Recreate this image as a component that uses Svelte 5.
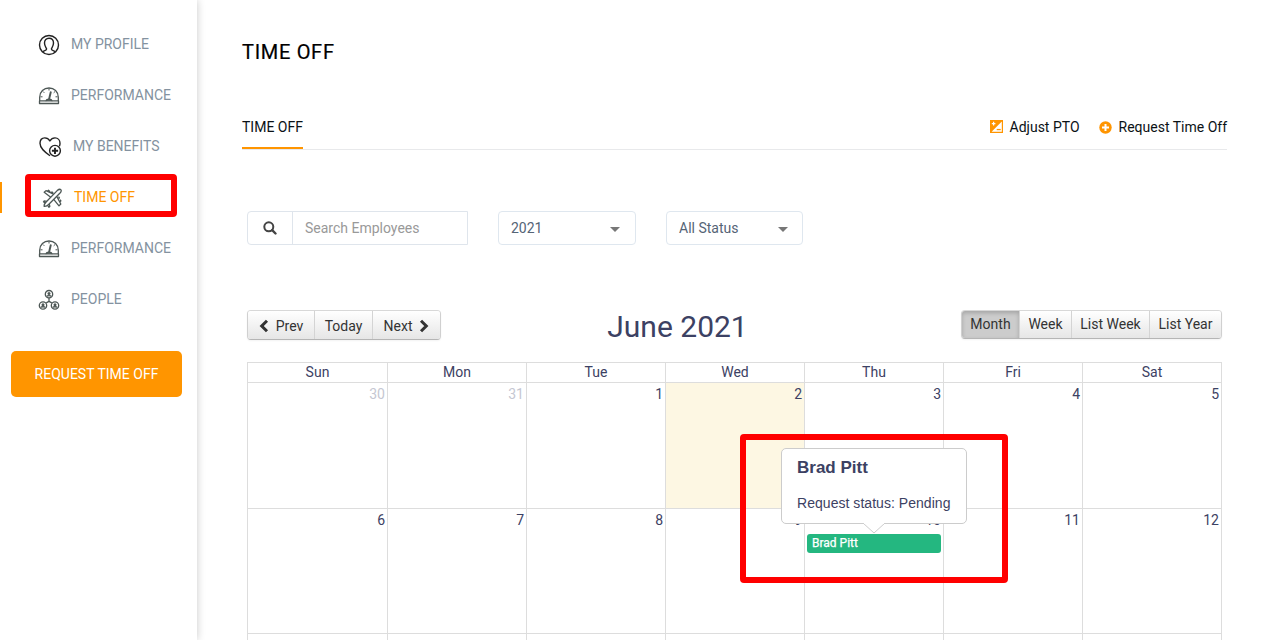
<script>
	const navItems = [
		{ label: 'MY PROFILE', icon: 'profile' },
		{ label: 'PERFORMANCE', icon: 'gauge' },
		{ label: 'MY BENEFITS', icon: 'heart' },
		{ label: 'TIME OFF', icon: 'plane', active: true },
		{ label: 'PERFORMANCE', icon: 'gauge' },
		{ label: 'PEOPLE', icon: 'people' }
	];

	const weekdays = ['Sun', 'Mon', 'Tue', 'Wed', 'Thu', 'Fri', 'Sat'];
	const weeks = [
		[30, 31, 1, 2, 3, 4, 5],
		[6, 7, 8, 9, 10, 11, 12],
		[13, 14, 15, 16, 17, 18, 19]
	];
	const views = ['Month', 'Week', 'List Week', 'List Year'];

	let view = $state('Month');
	let search = $state('');
</script>

<div class="page">
	<aside>
		<nav>
			{#each navItems as item}
				<a href="#top" class="nav-item {item.icon}" class:active={item.active}>
					{#if item.icon === 'profile'}
						<svg width="22" height="22" viewBox="0 0 22 22">
							<circle cx="11" cy="11" r="9.5" />
							<path d="M4.8 18.1c.6-1.6 3.8-1.4 3.8-3 0-1.3-2.1-2.5-2.1-6C6.5 6 8.3 4.2 11 4.2s4.500 1.800 4.500 4.900c0 3.500-2.100 4.700-2.100 6 0 1.600 3.200 1.400 3.800 3" />
						</svg>
					{:else if item.icon === 'gauge'}
						<svg class="soft" width="22" height="22" viewBox="0 0 22 22">
							<path d="M1.700 16v-3.700C1.700 6.800 5.800 3 11 3s9.300 3.800 9.300 9.300V16" />
							<path d="M1.700 15.800h6.500M13.800 15.800h6.500M1.500 15.800v2.700h19v-2.700" />
							<path d="M8.200 15.800c.3-2.200 5.300-2.200 5.600 0z" fill="#4d5755" />
							<path class="bold" d="M11 14.500l1.900-8" />
							<path class="thin" d="M11 3.500v2M5 6.500l1.300 1.300M17 6.500l-1.300 1.300M2.500 11.800h2M17.500 11.800h2" />
						</svg>
					{:else if item.icon === 'heart'}
						<svg width="24" height="24" viewBox="0 0 24 24">
							<path d="M12 20.800C6.800 17 2 13.300 2 8.200c0-3.200 2-5.300 4.800-5.300 2.300 0 3.900 1 5.100 3 1.200-2 2.800-3 5.100-3 2.900 0 5 2.200 5 5.300 0 1.200-.2 2.100-.6 3" />
							<circle cx="17" cy="15.800" r="5.400" />
							<path class="bold" d="M17 12.700v6.200M13.900 15.800h6.200" />
						</svg>
					{:else if item.icon === 'plane'}
						<svg class="soft" width="20" height="20" viewBox="0 0 20 20">
							<path d="M2.200 18.300c-.3-1.700.3-2.700 1.900-4.300L15.200 2.600c1.400-1.200 3.200-1.300 3.600-.9.500.5.200 2.300-1 3.600L6.900 16.300c-1.600 1.600-2.800 2.200-4.700 2z" />
							<path d="M11.600 6.200L4 2.600 2.200 4.300l6.500 4.900M14.800 8.500l4 7.500-1.800 1.900-5.300-6.500" />
							<path d="M5.500 3.200l1-.9 1.300 1.100-.3.800M9 4.800l1-.9 1.200 1.100M18 13.800l.9-.9-1-1.300M16.500 10.700l.9-.9-.9-1.200M4.800 13.300l-2.600-.4-.7.9 2.100 1.100M7.300 15.900l.5 2.500-.9.800-1.200-1.700" />
						</svg>
					{:else}
						<svg class="soft" width="22" height="22" viewBox="0 0 22 22">
							<circle cx="11" cy="5.200" r="3.700" />
							<circle cx="5" cy="16.500" r="3.700" />
							<circle cx="17" cy="16.500" r="3.700" />
							<path d="M11 9.100v3.300M8.200 13.900l2.800-1.500 2.800 1.500M8.600 7.300c.7-1 4.100-1 4.800 0M2.600 18.500c.7-1 4.100-1 4.800 0M14.600 18.500c.7-1 4.100-1 4.800 0" />
							<circle class="head" cx="11" cy="4.500" r="1.500" />
							<circle class="head" cx="5" cy="15.800" r="1.500" />
							<circle class="head" cx="17" cy="15.800" r="1.500" />
						</svg>
					{/if}
					<span>{item.label}</span>
					{#if item.active}
						<i class="marker"></i>
						<i class="nav-highlight"></i>
					{/if}
				</a>
			{/each}
		</nav>
		<button class="request">REQUEST TIME OFF</button>
	</aside>

	<main>
		<h1>TIME OFF</h1>

		<div class="tabs">
			<a href="#top" class="tab">TIME OFF</a>
			<div class="actions">
				<a href="#top">
					<svg class="adjust" width="13" height="13" viewBox="0 0 13 13">
						<path fill="#ff9500" d="M0 0h13v13H0z" />
						<path fill="#fff" d="M11.800 1.600v10.200H1.600zM3 1.800h1.200V3h1.200v1.200H4.200v1.200H3V4.200H1.800V3H3z" />
						<path fill="#ff9500" d="M6.700 8.900h4v1.300h-4z" />
					</svg>
					Adjust PTO
				</a>
				<a href="#top">
					<svg width="13" height="13" viewBox="0 0 13 13">
						<circle cx="6.500" cy="6.500" r="6.200" fill="#ff9500" />
						<path d="M6.500 3v7M3 6.500h7" stroke="#fff" stroke-width="2" />
					</svg>
					Request Time Off
				</a>
			</div>
		</div>

		<div class="filters">
			<div class="search">
				<span class="search-icon">
					<svg width="14" height="14" viewBox="0 0 14 14">
						<circle cx="5.800" cy="5.800" r="4.500" fill="none" stroke="#444" stroke-width="2" />
						<path d="M9.200 9.200l3.300 3.300" stroke="#444" stroke-width="2.400" stroke-linecap="round" />
					</svg>
				</span>
				<input type="text" placeholder="Search Employees" bind:value={search} />
			</div>
			<div class="select year">2021<i class="caret"></i></div>
			<div class="select status">All Status<i class="caret"></i></div>
		</div>

		<div class="toolbar">
			<div class="group paging">
				<button>
					<svg width="10" height="14" viewBox="0 0 10 14"><path d="M8 1.700L2.700 7 8 12.300" /></svg>
					<span>Prev</span>
				</button>
				<button>Today</button>
				<button>
					<span>Next</span>
					<svg width="10" height="14" viewBox="0 0 10 14"><path d="M2 1.700L7.300 7 2 12.300" /></svg>
				</button>
			</div>
			<h2>June 2021</h2>
			<div class="group views">
				{#each views as name}
					<button class:selected={view === name} onclick={() => (view = name)}>{name}</button>
				{/each}
			</div>
		</div>

		<div class="calendar">
			<div class="row head-row">
				{#each weekdays as day}
					<div class="cell">{day}</div>
				{/each}
			</div>
			{#each weeks as week, w}
				<div class="row week week-{w}">
					{#each week as day}
						<div class="cell" class:other={w === 0 && day > 20} class:today={w === 0 && day === 2}>
							<span class="num">{day}</span>
							{#if w === 1 && day === 10}
								<div class="event">
									Brad Pitt
									<div class="popover">
										<h3>Brad Pitt</h3>
										<p>Request status: Pending</p>
										<svg width="22" height="11" viewBox="0 0 22 11">
											<path d="M0 0l11 10L22 0" fill="#fff" stroke="#ccc" />
											<path d="M1 0h20" stroke="#fff" stroke-width="2" />
										</svg>
									</div>
									<i class="event-highlight"></i>
								</div>
							{/if}
						</div>
					{/each}
				</div>
			{/each}
		</div>
	</main>
</div>

<style>
	:global(body) {
		background: #fff;
	}

	.page {
		display: flex;
		width: 1268px;
		height: 640px;
		overflow: hidden;
		font-family: Roboto, sans-serif;
		font-size: 14px;
		color: #3c4163;
	}

	.page * {
		box-sizing: border-box;
	}

	a {
		color: inherit;
		text-decoration: none;
	}

	button {
		font: inherit;
		cursor: pointer;
	}

	h1,
	h2,
	h3,
	p {
		margin: 0;
	}

	aside {
		width: 197px;
		flex: none;
		padding-top: 19px;
		box-shadow: 0 0 8px rgba(0, 0, 0, 0.22);
	}

	.nav-item {
		position: relative;
		display: flex;
		align-items: center;
		gap: 11px;
		height: 51px;
		padding-left: 38px;
		color: #8492a0;
		line-height: 20px;
	}

	.nav-item span {
		padding-bottom: 2px;
	}

	.nav-item svg {
		margin-top: 1px;
		fill: none;
		stroke: #222;
		stroke-width: 1.4;
		stroke-linejoin: round;
	}

	.nav-item svg.soft {
		stroke: #4d5755;
		stroke-width: 1.3;
	}

	.nav-item svg .bold {
		stroke-width: 1.9;
	}

	.nav-item svg .thin {
		stroke-width: 1;
	}

	.nav-item svg .head {
		fill: #4d5755;
		stroke: none;
	}

	.nav-item.plane {
		padding-left: 42px;
		gap: 12px;
		color: #ff9500;
	}

	.marker {
		position: absolute;
		left: 0;
		top: 10px;
		width: 2px;
		height: 31px;
		background: #ff9500;
	}

	.nav-highlight {
		position: absolute;
		left: 25px;
		top: 2px;
		width: 152px;
		height: 43px;
		border: 6px solid #f00;
		border-radius: 4px;
	}

	.request {
		display: block;
		width: 171px;
		height: 46px;
		margin: 26px 0 0 11px;
		padding: 0;
		border: 0;
		border-radius: 5px;
		background: #ff9500;
		color: #fff;
	}

	main {
		flex: none;
		width: 1030px;
		padding: 39px 0 0 45px;
	}

	h1 {
		font-size: 20px;
		font-weight: 400;
		line-height: 26px;
		letter-spacing: 0.7px;
		color: #000;
		-webkit-text-stroke: 0.2px #000;
	}

	.tabs {
		display: flex;
		justify-content: space-between;
		height: 45px;
		margin-top: 40px;
		border-bottom: 1px solid #e8e9eb;
		color: #0b1216;
		line-height: 45px;
	}

	.tab {
		height: 44px;
		border-bottom: 2px solid #ff9500;
	}

	.actions {
		display: flex;
		gap: 19px;
	}

	.actions a {
		display: flex;
		align-items: center;
		gap: 7px;
		height: 44px;
	}

	.adjust {
		margin-bottom: 2px;
	}

	.filters {
		display: flex;
		gap: 30px;
		margin: 61px 0 0 5px;
	}

	.search {
		display: flex;
		width: 221px;
		height: 34px;
		border: 1px solid #dfe5ec;
		border-radius: 4px 0 0 4px;
	}

	.search-icon {
		display: flex;
		align-items: center;
		justify-content: center;
		width: 45px;
		border-right: 1px solid #dfe5ec;
	}

	input {
		width: 174px;
		padding: 0 12px;
		border: 0;
		outline: 0;
		background: none;
		font: inherit;
	}

	input::placeholder {
		color: #999;
	}

	.select {
		display: flex;
		align-items: center;
		justify-content: space-between;
		width: 138px;
		height: 34px;
		padding: 0 15px 0 12px;
		border: 1px solid #dfe7ef;
		border-radius: 4px;
		color: #556476;
	}

	.select.status {
		width: 137px;
		padding-right: 14px;
	}

	.caret {
		margin-top: 2px;
		border: 5px solid transparent;
		border-top-color: #777;
		border-bottom: 0;
	}

	.toolbar {
		display: flex;
		justify-content: space-between;
		align-items: flex-start;
		width: 975px;
		height: 52px;
		margin: 65px 0 0 5px;
	}

	.group {
		display: flex;
		border: 1px solid #ccc;
		border-color: #d8d8d8 #d0d0d0 #b5b5b5;
		border-radius: 4px;
		box-shadow: 0 1px 2px rgba(0, 0, 0, 0.05);
		overflow: hidden;
	}

	.group button {
		display: flex;
		align-items: center;
		justify-content: center;
		padding: 0;
		border: 0;
		border-right: 1px solid #d4d4d4;
		background: linear-gradient(#fff, #e6e6e6);
		color: #333;
	}

	.group button:last-child {
		border-right: 0;
	}

	.group svg {
		fill: none;
		stroke: #333;
		stroke-width: 3;
	}

	.paging {
		width: 194px;
		height: 30px;
	}

	.paging button {
		gap: 7px;
		width: 67px;
		padding-top: 2px;
	}

	.paging button:nth-child(2) {
		width: 58px;
	}

	.views {
		width: 261px;
		height: 29px;
	}

	.views button {
		width: 58px;
		padding-bottom: 1px;
	}

	.views button:nth-child(2) {
		width: 52px;
	}

	.views button:nth-child(3) {
		width: 78px;
	}

	.views button:nth-child(4) {
		width: 71px;
	}

	.views .selected {
		background: #ccc;
		box-shadow: inset 0 2px 4px rgba(0, 0, 0, 0.2);
	}

	h2 {
		font-size: 30px;
		font-weight: 400;
		line-height: 33px;
		margin-left: 68px;
		margin-right: 115px;
	}

	.calendar {
		width: 975px;
		margin-left: 5px;
		border: 1px solid #ddd;
		border-width: 1px 0 0 1px;
	}

	.row {
		display: grid;
		grid-template-columns: 140px repeat(6, 139px);
	}

	.cell {
		position: relative;
		border: 1px solid #ddd;
		border-width: 0 1px 1px 0;
	}

	.head-row {
		height: 20px;
		text-align: center;
		line-height: 19px;
	}

	.week {
		height: 125px;
	}

	.week-0 {
		height: 126px;
	}

	.num {
		display: block;
		padding: 2px 2px 0;
		text-align: right;
		line-height: 19px;
	}

	.week-2 .num {
		padding-top: 3px;
	}

	.other .num {
		color: #c5c7d2;
	}

	.today {
		background: #fdf7e3;
	}

	.event {
		position: relative;
		height: 19px;
		margin: 4px 2px 0;
		padding-left: 5px;
		border-radius: 3px;
		background: #24b780;
		color: #fff;
		font-size: 12px;
		line-height: 19px;
		-webkit-text-stroke: 0.25px;
	}

	.popover {
		position: absolute;
		left: -26px;
		bottom: 29px;
		width: 186px;
		height: 76px;
		padding: 8px 15px;
		border: 1px solid #ccc;
		border-radius: 5px;
		background: #fff;
		color: #3c4163;
		font-family: "Liberation Sans", Arial, sans-serif;
		-webkit-text-stroke: 0;
		z-index: 1;
	}

	.popover h3 {
		font-size: 17px;
		line-height: 22px;
	}

	.popover p {
		margin-top: 15px;
		font-size: 14px;
		line-height: 18px;
		letter-spacing: 0.04px;
		white-space: nowrap;
	}

	.popover svg {
		position: absolute;
		left: 81px;
		top: 74px;
	}

	.event-highlight {
		position: absolute;
		left: -67px;
		top: -100px;
		width: 268px;
		height: 149px;
		border: 6px solid #f00;
		border-radius: 4px;
		z-index: 2;
	}
</style>
